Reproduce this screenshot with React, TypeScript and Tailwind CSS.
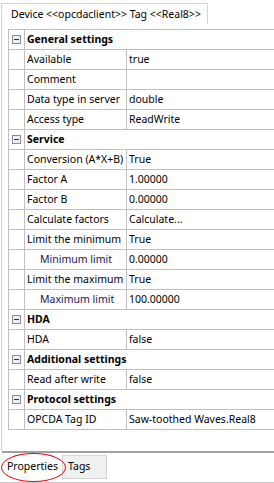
import React from "react";

type Row = { name: string; value?: string; cat?: boolean; indent?: boolean };

const rows: Row[] = [
  { name: "General settings", cat: true },
  { name: "Available", value: "true" },
  { name: "Comment", value: "" },
  { name: "Data type in server", value: "double" },
  { name: "Access type", value: "ReadWrite" },
  { name: "Service", cat: true },
  { name: "Conversion (A*X+B)", value: "True" },
  { name: "Factor A", value: "1.00000" },
  { name: "Factor B", value: "0.00000" },
  { name: "Calculate factors", value: "Calculate..." },
  { name: "Limit the minimum", value: "True" },
  { name: "Minimum limit", value: "0.00000", indent: true },
  { name: "Limit the maximum", value: "True" },
  { name: "Maximum limit", value: "100.00000", indent: true },
  { name: "HDA", cat: true },
  { name: "HDA", value: "false" },
  { name: "Additional settings", cat: true },
  { name: "Read after write", value: "false" },
  { name: "Protocol settings", cat: true },
  { name: "OPCDA Tag ID", value: "Saw-toothed Waves.Real8" },
];

function Minus() {
  return (
    <div className="w-[9px] h-[9px] border border-[#8a8a9a] bg-[#eef0f6] flex items-center justify-center">
      <div className="w-[5px] h-px bg-[#333]" />
    </div>
  );
}

export default function App() {
  return (
    <div
      className="w-[274px] h-[483px] bg-white relative overflow-hidden text-[10.5px] text-black"
      style={{ fontFamily: "'Noto Sans', 'Open Sans', sans-serif" }}
    >
      {/* top tab */}
      <div className="h-[24px] flex items-end">
        <div className="ml-px h-[21px] w-[207px] border border-b-0 border-[#d4d4d4] flex items-center pl-[9px] leading-none whitespace-nowrap">
          Device &lt;&lt;opcdaclient&gt;&gt; Tag &lt;&lt;Real8&gt;&gt;
        </div>
      </div>
      {/* panel */}
      <div className="ml-[1px] border-l border-[#d4d4d4] h-[427px] pt-[5px] pl-[6px] flex flex-col">
        <div className="border-t border-l border-[#c0c0c0]">
          {rows.map((r, i) => (
            <div key={i} className="flex h-[20px] border-b border-[#c0c0c0]">
              <div className="w-[16px] border-r border-[#c0c0c0] flex items-center justify-center shrink-0">
                {r.cat && <Minus />}
              </div>
              <div
                className={`shrink-0 flex items-center whitespace-nowrap overflow-hidden ${
                  r.cat ? "font-bold w-[250px]" : "w-[102px] border-r border-[#c0c0c0]"
                } ${r.indent ? "pl-[15px] text-[#1c1452]" : "pl-[2px]"}`}
              >
                {r.name}
              </div>
              {!r.cat && (
                <div className="flex-1 flex items-center pl-[2px] whitespace-nowrap">{r.value}</div>
              )}
            </div>
          ))}
        </div>
      </div>
      {/* bottom separator */}
      <div className="h-[2px] bg-[#a0a0a0] ml-[2px]" />
      {/* bottom tabs */}
      <div className="h-[30px] flex items-start border-b border-[#c8c8c8] relative">
        <div className="w-[62px] h-[28px] flex items-center pl-[7px] bg-white whitespace-nowrap">Properties</div>
        <div className="w-[45px] h-[24px] mt-[2px] bg-[#f0f0f0] border border-[#d4d4d4] flex items-center pl-[5px]">
          Tags
        </div>
        <div className="absolute left-[1px] top-[0px] w-[65px] h-[29px] rounded-[50%] border-[1.5px] border-[#e01010]" />
      </div>
    </div>
  );
}
